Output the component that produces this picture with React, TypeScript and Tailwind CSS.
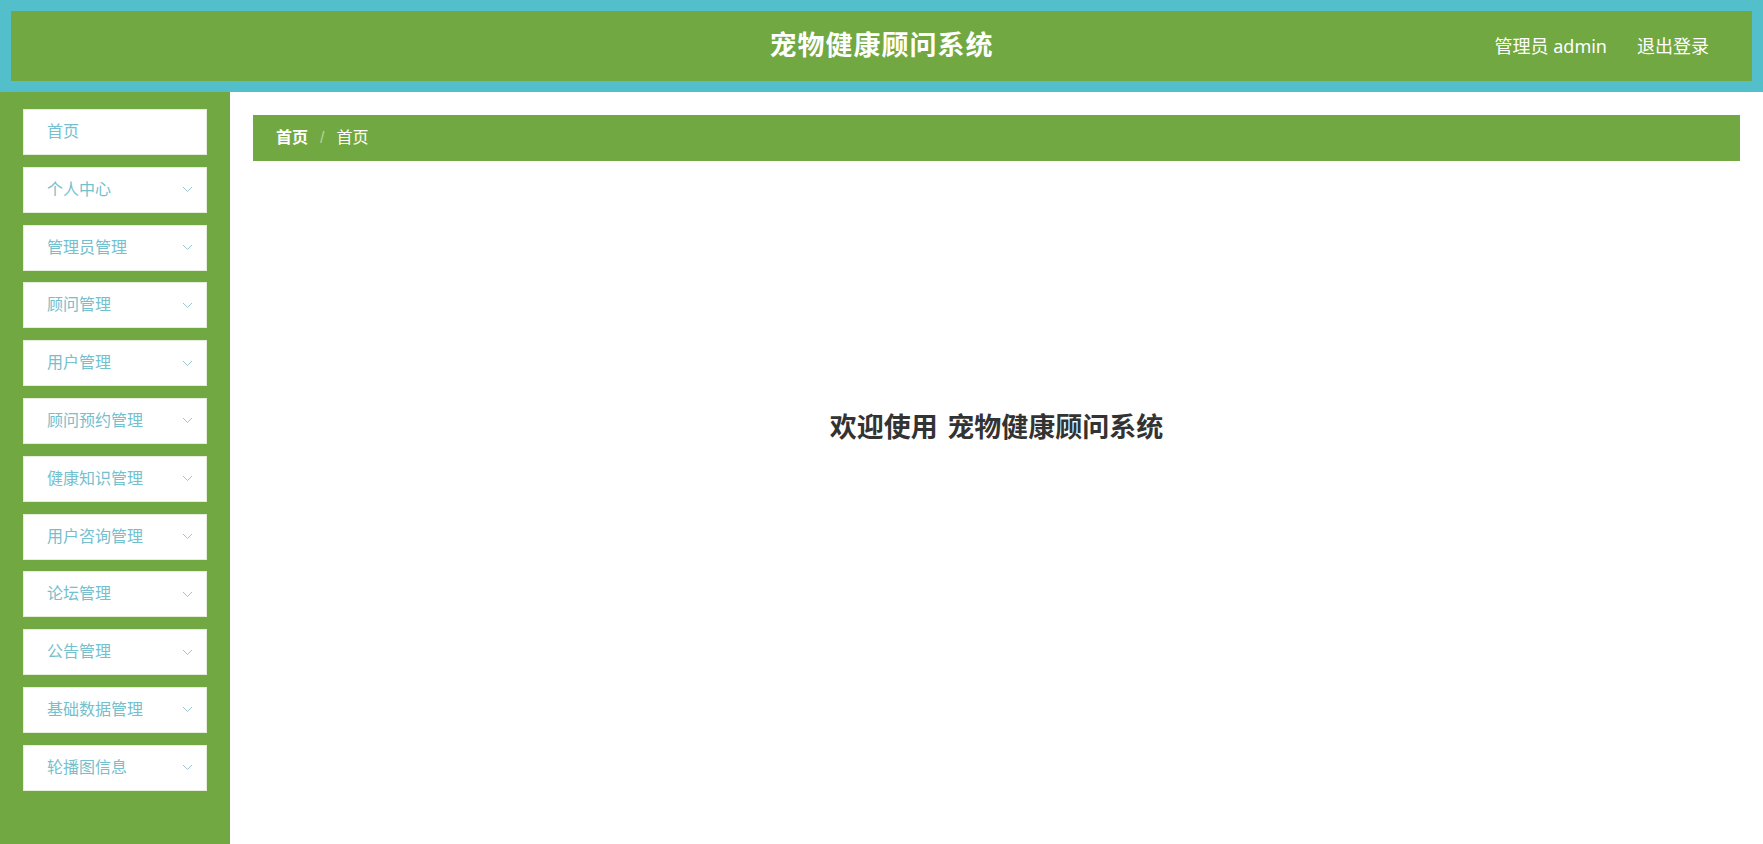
import React from "react";

const menus = [
  { label: "首页", sub: false },
  { label: "个人中心", sub: true },
  { label: "管理员管理", sub: true },
  { label: "顾问管理", sub: true },
  { label: "用户管理", sub: true },
  { label: "顾问预约管理", sub: true },
  { label: "健康知识管理", sub: true },
  { label: "用户咨询管理", sub: true },
  { label: "论坛管理", sub: true },
  { label: "公告管理", sub: true },
  { label: "基础数据管理", sub: true },
  { label: "轮播图信息", sub: true },
];

const Chevron = () => (
  <svg width="11" height="7" viewBox="0 0 11 7" fill="none">
    <polyline points="1,1 5.5,5.5 10,1" stroke="#9cc5cd" strokeWidth="1" />
  </svg>
);

const App = () => {
  return (
    <div
      className="w-full h-[844px] flex flex-col bg-white overflow-hidden"
      style={{ fontFamily: '"Liberation Sans", "Noto Sans CJK SC", sans-serif' }}
    >
      {/* header */}
      <div className="h-[92px] shrink-0 bg-[#52bfcb] p-[11px]">
        <div className="relative h-full bg-[#72a841] flex items-center justify-center">
          <div className="text-white text-[27px] font-bold tracking-[1px] leading-none">
            宠物健康顾问系统
          </div>
          <div className="absolute right-[43px] top-0 h-full flex items-center gap-[30px] text-white text-[18px] font-['Noto_Sans','Noto_Sans_CJK_SC',sans-serif]">
            <span>管理员 admin</span>
            <span>退出登录</span>
          </div>
        </div>
      </div>

      <div className="flex flex-1 min-h-0">
        {/* sidebar */}
        <div className="w-[230px] shrink-0 bg-[#72a841] pt-[17px] px-[23px] flex flex-col gap-[11.8px]">
          {menus.map((m) => (
            <div
              key={m.label}
              className="h-[46px] bg-white flex items-center justify-between pl-[23px] pr-[13px] border border-[#e4eedb]"
            >
              <span className="text-[16px] text-[#74c0cd]">{m.label}</span>
              {m.sub && <Chevron />}
            </div>
          ))}
        </div>

        {/* main */}
        <div className="flex-1 p-[23px] flex flex-col">
          <div className="h-[46px] bg-[#72a841] flex items-center pl-[23px] text-[16px] text-white">
            <span className="font-bold">首页</span>
            <span className="mx-[12px] text-[#b7d39c]">/</span>
            <span>首页</span>
          </div>
          <div className="mt-[254px] text-center text-[27px] leading-[26px] font-bold text-[#333333] [word-spacing:2px]">
            欢迎使用 宠物健康顾问系统
          </div>
        </div>
      </div>
    </div>
  );
};

export default App;
